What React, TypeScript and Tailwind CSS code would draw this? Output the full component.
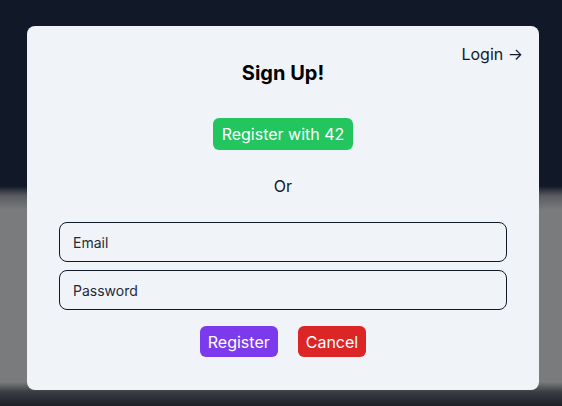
import React from 'react';

const SignUpModal: React.FC = () => {
  return (
    <div className="relative ml-[27px] mt-[26px] h-[364px] w-[512px] rounded-lg bg-[#f0f4f9] pt-[33px] text-[#111827]">
      <button className="absolute right-[16px] top-[16px] text-base text-[#111827]">
        Login &rarr;
      </button>

      <h2 className="text-center text-xl font-bold leading-[28px] text-black">Sign Up!</h2>

      <div className="mt-[31px] flex justify-center">
        <button className="h-[32px] rounded-md bg-[#22c55e] px-[9px] text-base text-white">
          Register with 42
        </button>
      </div>

      <p className="mt-[24px] text-center text-base leading-6">Or</p>

      <div className="mt-[24px] flex flex-col gap-2 px-[32px]">
        <input
          type="email"
          placeholder="Email"
          className="h-[40px] w-full rounded-lg border border-[#111827] bg-transparent px-[13px] text-sm placeholder:text-[#1f2937]"
        />
        <input
          type="password"
          placeholder="Password"
          className="h-[40px] w-full rounded-lg border border-[#111827] bg-transparent px-[13px] text-sm placeholder:text-[#1f2937]"
        />
      </div>

      <div className="mt-[16px] flex justify-center gap-5">
        <button className="h-[31px] rounded-md bg-[#7c3aed] px-2 text-base text-white">Register</button>
        <button className="h-[31px] rounded-md bg-[#dc2626] px-2 text-base text-white">Cancel</button>
      </div>
    </div>
  );
};

export default function App() {
  return (
    <div
      className="h-[406px] w-[562px] overflow-hidden pt-px bg-[linear-gradient(to_bottom,#111827_0px,#111827_186px,#5a5c60_196px,#7a7b7c_210px,#7a7b7c_382px,#3a3d43_392px,#1c1f26_406px)]"
      style={{ fontFamily: 'Inter, "Noto Sans", sans-serif' }}
    >
      <div className="-mt-px">
        <SignUpModal />
      </div>
    </div>
  );
}
